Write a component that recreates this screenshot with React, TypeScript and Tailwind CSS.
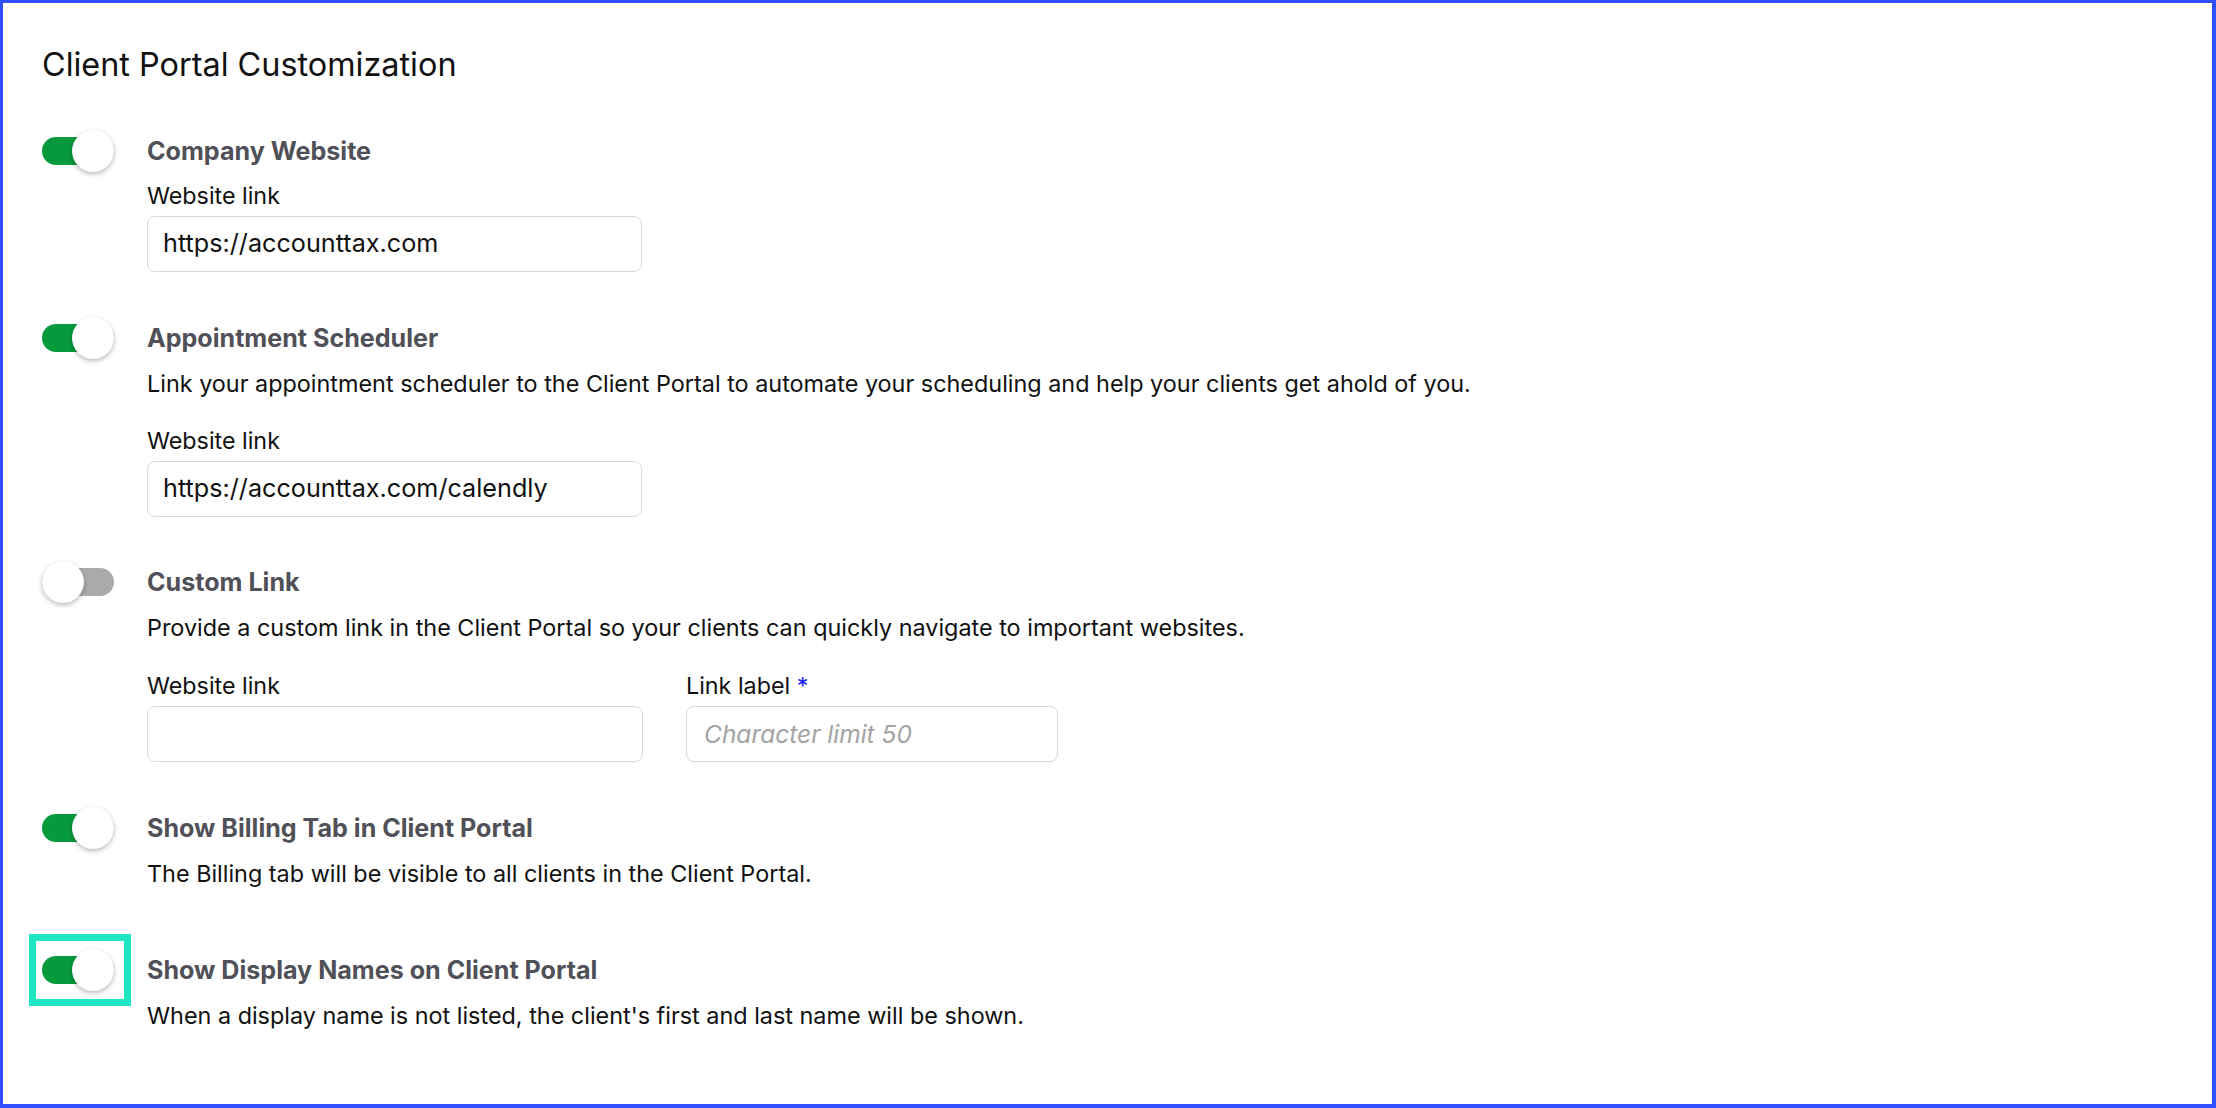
import React from 'react'

function Toggle({ on }: { on: boolean }) {
  return (
    <div className={`relative h-[28px] w-[72px] rounded-full ${on ? 'bg-[#079a3c]' : 'bg-[#aaaaaa]'}`}>
      <div
        className={`absolute top-[-7px] h-[42px] w-[42px] rounded-full bg-white shadow-[0_2px_5px_rgba(0,0,0,0.28)] ${on ? 'left-[30px]' : 'left-0'}`}
      />
    </div>
  )
}

function Field({ label, value, placeholder, required, width }: { label: string; value?: string; placeholder?: string; required?: boolean; width: string }) {
  return (
    <div className={width}>
      <div className="text-[23.3px] leading-[32px] text-[#111]">
        {label}
        {required && <span className="text-[#1a1aff]"> *</span>}
      </div>
      <div className="mt-[4px] flex h-[56px] items-center rounded-lg border border-[#d9d9d9] bg-white px-[15px]">
        {value ? (
          <span className="text-[25.2px] text-[#111]">{value}</span>
        ) : (
          <span className="pl-[2px] text-[24.5px] italic text-[#a3a3a3]">{placeholder}</span>
        )}
      </div>
    </div>
  )
}

function Section({ on, title, desc, highlight, className, children }: { on: boolean; title: string; desc?: string; highlight?: boolean; className?: string; children?: React.ReactNode }) {
  return (
    <div className={`flex items-start ${className ?? ''}`}>
      <div className="w-[105px] shrink-0 pt-[2px]">
        <div className="relative w-[72px]">
          {highlight && (
            <div className="absolute left-[-13px] top-[-22px] h-[72px] w-[102px] border-[7px] border-[#1ee6c3]" />
          )}
          <Toggle on={on} />
        </div>
      </div>
      <div className="flex-1">
        <div className="text-[25.1px] font-bold leading-[32px] text-[#505058]">{title}</div>
        {desc && <div className="mt-[14px] text-[23.4px] leading-[32px] text-[#111]">{desc}</div>}
        {children}
      </div>
    </div>
  )
}

export default function App() {
  return (
    <div
      className="h-screen w-screen overflow-hidden border-b-4 border-l-[3px] border-r-4 border-t-[3px] border-[#3050ff] bg-white pl-[39px] pt-[42px]"
      style={{ fontFamily: 'Inter, "Noto Sans", sans-serif' }}
    >
      <h1 className="text-[32.4px] font-normal leading-[40px] text-[#111]">Client Portal Customization</h1>

      <Section on title="Company Website" className="mt-[50px]">
        <div className="mt-[13px]">
          <Field label="Website link" value="https://accounttax.com" width="w-[495px]" />
        </div>
      </Section>

      <Section
        on
        title="Appointment Scheduler"
        desc="Link your appointment scheduler to the Client Portal to automate your scheduling and help your clients get ahold of you."
        className="mt-[50px]"
      >
        <div className="mt-[25px]">
          <Field label="Website link" value="https://accounttax.com/calendly" width="w-[495px]" />
        </div>
      </Section>

      <Section
        on={false}
        title="Custom Link"
        desc="Provide a custom link in the Client Portal so your clients can quickly navigate to important websites."
        className="mt-[49px]"
      >
        <div className="mt-[26px] flex gap-[43px]">
          <Field label="Website link" value="" placeholder="" width="w-[496px]" />
          <Field label="Link label" placeholder="Character limit 50" required width="w-[372px]" />
        </div>
      </Section>

      <Section
        on
        title="Show Billing Tab in Client Portal"
        desc="The Billing tab will be visible to all clients in the Client Portal."
        className="mt-[50px]"
      />

      <Section
        on
        highlight
        title="Show Display Names on Client Portal"
        desc="When a display name is not listed, the client's first and last name will be shown."
        className="mt-[64px]"
      />
    </div>
  )
}
